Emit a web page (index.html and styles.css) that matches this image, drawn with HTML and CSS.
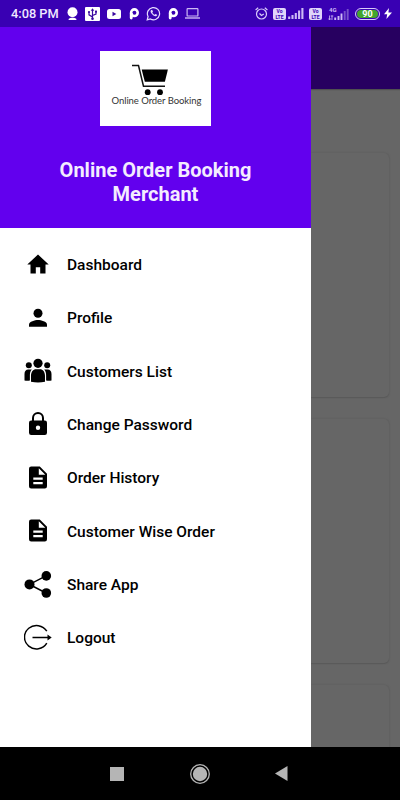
FILE: index.html
```html
<!DOCTYPE html>
<html lang="en">
<head>
	<meta charset="UTF-8">
	<title>Online Order Booking Merchant</title>
	<link rel="stylesheet" href="styles.css">
</head>
<body>
	<div class="phone">
		<div class="status">
			<span class="time">4:08 PM</span>
			<div class="status-left">
				<svg width="11" height="14" viewBox="0 0 11 14"><circle cx="5.5" cy="5.2" r="5" fill="#fff"/><path d="M1.500 13c0-2 2-2.300 4-2.300s4 .3 4 2.300z" fill="#fff"/></svg>
				<svg width="15" height="14" viewBox="0 0 15 14"><rect width="15" height="14" rx="1" fill="#fff"/><path d="M7.500 3v9M7.500 10L4 7.800V5M7.500 8.500L11 7V4.500" fill="none" stroke="#3a08a0" stroke-width="1.200"/><path d="M5.700 3.800L7.500 1.200l1.800 2.600z" fill="#3a08a0"/><circle cx="7.500" cy="11.800" r="1.300" fill="#3a08a0"/><circle cx="4" cy="5" r="1.100" fill="#3a08a0"/><rect x="10" y="3.600" width="2" height="2" fill="#3a08a0"/></svg>
				<svg width="14" height="10" viewBox="0 0 14 10"><rect width="14" height="10" rx="2.500" fill="#fff"/><path d="M5.500 2.800v4.400L9.300 5z" fill="#3a08a0"/></svg>
				<svg width="10" height="12" viewBox="0 0 10 12"><circle cx="5.400" cy="4.700" r="3.300" fill="none" stroke="#fff" stroke-width="2.600"/><path d="M.8 5h2.900v4.800a1.450 1.800 0 0 1-2.900 0z" fill="#fff"/></svg>
				<svg width="15" height="15" viewBox="0 0 15 15"><path d="M1.200 13.800l.9-3.300a6.100 6.100 0 1 1 2.300 2.400z" fill="none" stroke="#e7dcff" stroke-width="1.200"/><path d="M5.200 4.100c-1 .7-.8 2 .3 3.500 1.300 1.800 3.200 3 4.600 2.600.9-.3 1.200-1 1-1.400L9.500 8l-.8.8C7.600 8.400 6.800 7.500 6.300 6.500L7 5.700 6.300 4z" fill="#e7dcff"/></svg>
				<svg width="10" height="12" viewBox="0 0 10 12"><circle cx="5.400" cy="4.700" r="3.300" fill="none" stroke="#fff" stroke-width="2.600"/><path d="M.8 5h2.900v4.800a1.450 1.800 0 0 1-2.900 0z" fill="#fff"/></svg>
				<svg width="15" height="11" viewBox="0 0 15 11"><rect x="2.100" y=".6" width="10.800" height="7.400" rx=".6" fill="none" stroke="#cdbaf5" stroke-width="1.200"/><path d="M0 10h15" stroke="#cdbaf5" stroke-width="1.400"/></svg>
			</div>
			<div class="status-right">
				<svg class="alarm" width="13" height="13" viewBox="0 0 13 13"><circle cx="6.500" cy="7" r="5" fill="none" stroke="#d9cbfa" stroke-width="1.200"/><path d="M.6 3L3.200.8M12.400 3L9.800.8M4.500 6.500l2 2 2.300-1.500" fill="none" stroke="#d9cbfa" stroke-width="1.200"/></svg>
				<span class="volte"><span>Vo</span><span>LTE</span></span>
				<svg class="signal" width="16" height="11" viewBox="0 0 16 11"><path d="M1.200 11V8.500M4.500 11V7M7.800 11V5M11.100 11V2.500M14.400 11V0" stroke="#cdbaf5" stroke-width="2.100"/></svg>
				<span class="volte"><span>Vo</span><span>LTE</span></span>
				<svg class="signal-4g" width="21" height="16" viewBox="0 0 21 16"><text x="1" y="5.500" class="tiny">4G</text><path d="M1.500 14V9.500M4 9.500V14M.3 13h3M2.700 10h2.600" stroke="#cdbaf5" stroke-width=".8"/><path d="M7.200 14v-2.500M10.500 14v-4M13.500 14V7.500" stroke="#cdbaf5" stroke-width="1.900"/><path d="M16.700 14V5M19.700 14V3" stroke="#7751cb" stroke-width="1.900"/></svg>
				<span class="battery"><span class="level">90</span></span>
				<svg width="8" height="11" viewBox="0 0 8 11"><path d="M5 0L0 6.200h3.200L2.400 11 8 4.500H4.400z" fill="#fff"/></svg>
			</div>
		</div>

		<div class="screen">
			<div class="drawer">
				<div class="header">
					<div class="logo">
						<svg width="111" height="75" viewBox="0 0 111 75">
							<path d="M32 14.600h6.500l5 20.700H65" fill="none" stroke="#111" stroke-width="1.500"/>
							<path d="M41.700 18.500h26.200l-3 12.300H44.800z" fill="#000"/>
							<circle cx="47.700" cy="41.200" r="2.900"/>
							<circle cx="60" cy="41.200" r="2.900"/>
							<text x="11.500" y="52.500" textLength="90" class="logo-text">Online Order Booking</text>
						</svg>
					</div>
					<h1>Online Order Booking Merchant</h1>
				</div>
				<ul class="menu">
					<li>
						<svg viewBox="0 0 28 28"><path d="M14 3.500L3.300 13.500h3.200v9h5.300v-6.300h4.400v6.300h5.300v-9h3.200z"/></svg>
						<span>Dashboard</span>
					</li>
					<li>
						<svg viewBox="0 0 28 28"><circle cx="14" cy="9.300" r="4.500"/><path d="M5 22.800v-2.300c0-3 6-4.500 9-4.500s9 1.500 9 4.500v2.300z"/></svg>
						<span>Profile</span>
					</li>
					<li>
						<svg viewBox="0 0 28 28"><circle cx="14" cy="6.300" r="4.600"/><circle cx="4.800" cy="8.300" r="3"/><circle cx="23.200" cy="8.300" r="3"/><path d="M7 24.800v-6c0-3.800 2.200-6.500 5-6.500h4c2.800 0 5 2.700 5 6.500v6q-7 1.600-14 0zM.5 23.500V17c0-2.700 1.500-4.400 3.700-4.400h3.600C6.300 14 5.900 16.500 5.900 18.500v5q-2.700.5-5.400 0zM27.500 23.500V17c0-2.700-1.500-4.400-3.700-4.400h-3.600c1.500 1.400 1.900 3.900 1.900 5.900v5q2.700.5 5.400 0z"/></svg>
						<span>Customers List</span>
					</li>
					<li>
						<svg viewBox="0 0 28 28"><path d="M9 10.500V7a5 5 0 0 1 10 0v3.500" fill="none" stroke="#000" stroke-width="2"/><path fill-rule="evenodd" d="M7.200 9.500h13.600A2.200 2.200 0 0 1 23 11.700v10.100a2.200 2.200 0 0 1-2.200 2.200H7.200A2.200 2.200 0 0 1 5 21.800V11.700A2.200 2.200 0 0 1 7.200 9.500zM14 14.500a2.200 2.200 0 1 0 0 4.400 2.200 2.200 0 0 0 0-4.400z"/></svg>
						<span>Change Password</span>
					</li>
					<li>
						<svg viewBox="0 0 28 28"><path fill-rule="evenodd" d="M7.200 2.500h8.600L23 9.700v12.600a2.200 2.200 0 0 1-2.200 2.200H7.200A2.200 2.200 0 0 1 5 22.300V4.700a2.200 2.200 0 0 1 2.200-2.200zM14.800 4.200v6.500h6.500zM9.300 13.500v2.200h9.400v-2.200zM9.300 18v2.200h9.400V18z"/></svg>
						<span>Order History</span>
					</li>
					<li>
						<svg viewBox="0 0 28 28"><path fill-rule="evenodd" d="M7.200 2.500h8.600L23 9.700v12.600a2.200 2.200 0 0 1-2.200 2.200H7.200A2.200 2.200 0 0 1 5 22.300V4.700a2.200 2.200 0 0 1 2.200-2.200zM14.800 4.200v6.500h6.500zM9.300 13.500v2.200h9.400v-2.200zM9.300 18v2.200h9.400V18z"/></svg>
						<span>Customer Wise Order</span>
					</li>
					<li>
						<svg viewBox="0 0 28 28"><path d="M22 4.900L5.500 13.400 22 22" fill="none" stroke="#000" stroke-width="1.500"/><circle cx="5.500" cy="13.400" r="5"/><circle cx="22.300" cy="4.900" r="4.800"/><circle cx="22.300" cy="22" r="4.800"/></svg>
						<span>Share App</span>
					</li>
					<li>
						<svg viewBox="0 0 28 28"><path d="M22.800 7.200A12 11.700 0 1 0 22.800 19.200M8.500 13.500H24" fill="none" stroke="#000" stroke-width="1.500"/><path d="M23.500 10.600l4.200 2.900-4.200 2.900z"/></svg>
						<span>Logout</span>
					</li>
				</ul>
			</div>
			<div class="behind">
				<div class="toolbar"></div>
				<div class="cards">
					<div class="card"></div>
					<div class="card"></div>
					<div class="card"></div>
				</div>
			</div>
		</div>

		<div class="navbar">
			<svg width="14" height="14" viewBox="0 0 14 14"><rect width="14" height="14" fill="#b5b5b5"/></svg>
			<svg width="20" height="20" viewBox="0 0 20 20"><circle cx="10" cy="10" r="9.300" fill="none" stroke="#b5b5b5" stroke-width="1.300"/><circle cx="10" cy="10" r="7.200" fill="#b5b5b5"/></svg>
			<svg width="13" height="15" viewBox="0 0 13 15"><path d="M12.500 0v15L0 7.500z" fill="#b5b5b5"/></svg>
		</div>
	</div>
</body>
</html>
```
FILE: styles.css
```css
* {
	box-sizing: border-box;
}
body {
	margin: 0;
	font-family: Roboto, "Liberation Sans", sans-serif;
	background-color: #000;
}
svg {
	display: block;
	flex: none;
}
.phone {
	width: 400px;
	height: 800px;
	display: flex;
	flex-direction: column;
	overflow: hidden;
}
.status {
	height: 27px;
	flex: none;
	display: flex;
	align-items: center;
	padding: 0 8px 0 11px;
	background-color: #3900b3;
	color: #f0e9ff;
}
.time {
	width: 56px;
	font-size: 12.800px;
	font-weight: 500;
	white-space: nowrap;
}
.status-left {
	display: flex;
	align-items: center;
	gap: 7.200px;
}
.status-right {
	display: flex;
	align-items: center;
	margin-left: auto;
}
.alarm {
	margin-right: 5px;
}
.volte {
	width: 13px;
	height: 12px;
	display: flex;
	flex-direction: column;
	align-items: center;
	justify-content: center;
	border-radius: 2px;
	background-color: #e0d5fa;
	color: #3900b3;
	font-size: 5px;
	font-weight: 700;
	line-height: 6px;
}
.signal {
	margin: 0 5px 0 2px;
}
.signal-4g {
	margin: 0 6px;
}
.tiny {
	font-size: 6px;
	font-weight: 700;
	fill: #cdbaf5;
}
.battery {
	width: 25px;
	height: 12px;
	margin-right: 4px;
	padding: 1px;
	border: 1px solid #d9cbfa;
	border-radius: 6px;
}
.level {
	display: block;
	height: 8px;
	border-radius: 4px;
	background-color: #43a52d;
	color: #fff;
	font-size: 9px;
	font-weight: 700;
	line-height: 8px;
	text-align: center;
}
.screen {
	height: 720px;
	flex: none;
	display: flex;
}
.drawer {
	width: 311px;
	flex: none;
	background-color: #fff;
}
.header {
	height: 201px;
	padding-top: 24px;
	background-color: #6200ee;
}
.logo {
	width: 111px;
	height: 75px;
	margin: 0 auto;
	background-color: #fff;
}
.logo-text {
	font-family: Lato, "Open Sans", sans-serif;
	font-size: 9.500px;
	font-weight: 400;
	fill: #333;
}
.header h1 {
	width: 230px;
	margin: 32px auto 0;
	color: #f4ecff;
	font-size: 20px;
	font-weight: 700;
	line-height: 24px;
	text-align: center;
}
.menu {
	margin: 0;
	padding: 10px 0 0 24px;
	list-style: none;
}
.menu li {
	height: 53.330px;
	display: flex;
	align-items: center;
	gap: 15px;
	color: #000;
	font-size: 15.500px;
	font-weight: 500;
}
.menu li span {
	padding-top: 1px;
}
.menu svg {
	width: 28px;
	height: 28px;
}
.behind {
	flex: 1;
	background-color: #666;
	overflow: hidden;
}
.toolbar {
	height: 62px;
	background-color: #270060;
	box-shadow: 0 1px 1px #505050;
}
.cards {
	padding: 64px 11px 0 0;
	display: flex;
	flex-direction: column;
	gap: 22px;
}
.card {
	height: 244px;
	flex: none;
	border-radius: 0 5px 5px 0;
	background-color: #666;
	box-shadow: 0 0 2px #585858, 0 1px 1px #5a5a5a;
}
.navbar {
	flex: 1;
	display: flex;
	align-items: center;
	justify-content: space-between;
	padding: 0 112px 0 110px;
	background-color: #000;
}
```
